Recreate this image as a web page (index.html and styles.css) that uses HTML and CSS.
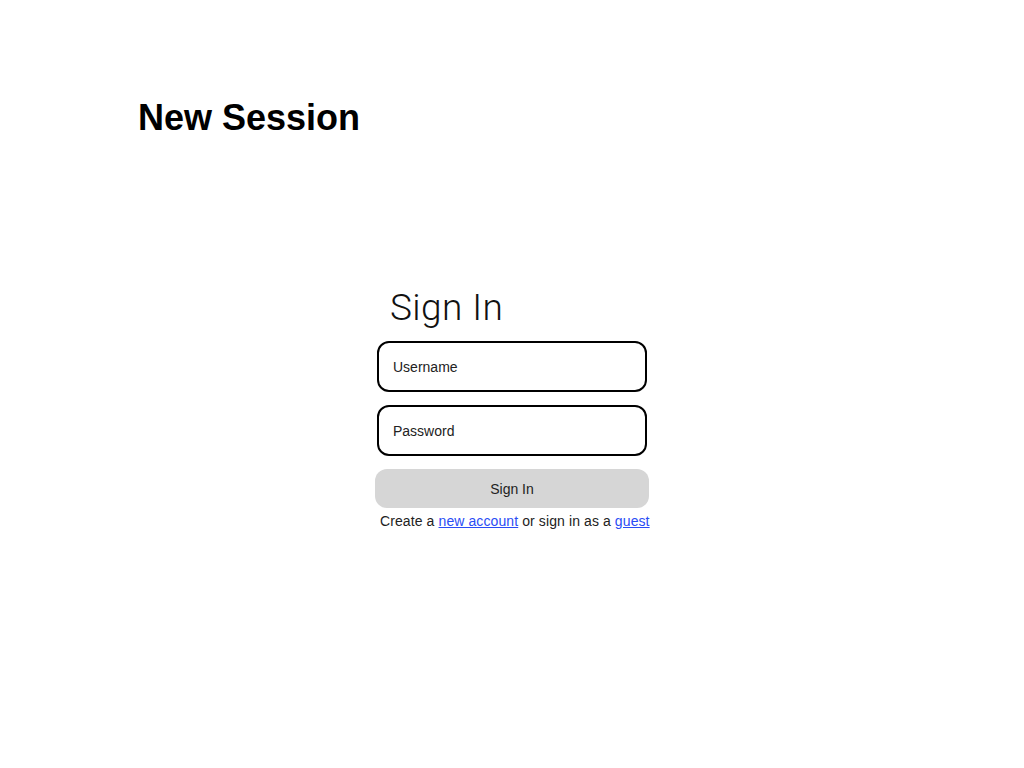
FILE: index.html
```html
<!DOCTYPE html>
<html>
<head>
<meta charset="utf-8">
<link rel="stylesheet" href="styles.css">
</head>
<body>
<header class="page-header">
  <h1 class="page-title">New Session</h1>
</header>
<main class="content">
  <form class="signin">
    <h2 class="signin-title">Sign In</h2>
    <div class="field">Username</div>
    <div class="field">Password</div>
    <div class="btn">Sign In</div>
    <p class="note">Create a <a href="#">new account</a> or sign in as a <a href="#">guest</a></p>
  </form>
</main>
</body>
</html>
```
FILE: styles.css
```css
html, body {
  margin: 0;
  padding: 0;
  background: #fff;
  width: 1024px;
  height: 768px;
  overflow: hidden;
  font-family: "Liberation Sans", Arial, sans-serif;
  color: #000;
}
.page-header {
  padding: 98px 0 0 138px;
}
.page-title {
  margin: 0;
  font-size: 36px;
  line-height: 40px;
  font-weight: bold;
  letter-spacing: 0;
}
.content {
  display: flex;
  justify-content: center;
  padding-top: 149px;
}
.signin {
  width: 274px;
  display: flex;
  flex-direction: column;
  margin: 0;
}
.signin-title {
  margin: 0 0 12px 15px;
  font-family: Roboto, "Liberation Sans", sans-serif;
  font-weight: 300;
  font-size: 37px;
  line-height: 42px;
  letter-spacing: 0.4px;
  color: #111;
}
.field {
  margin: 0 2px 13px 2px;
  height: 47px;
  border: 2px solid #000;
  border-radius: 12px;
  display: flex;
  align-items: center;
  padding-left: 14px;
  font-size: 14px;
  color: #222;
}
.field + .field {
  margin-bottom: 13px;
}
.btn {
  height: 39px;
  border-radius: 12px;
  background: #d6d6d6;
  display: flex;
  align-items: center;
  justify-content: center;
  font-size: 14px;
  color: #222;
}
.note {
  margin: 4px 0 0 5px;
  font-size: 14px;
  line-height: 18px;
  letter-spacing: 0.1px;
  color: #222;
  white-space: nowrap;
}
.note a {
  color: #2a4cf5;
  text-decoration: underline;
}
```
